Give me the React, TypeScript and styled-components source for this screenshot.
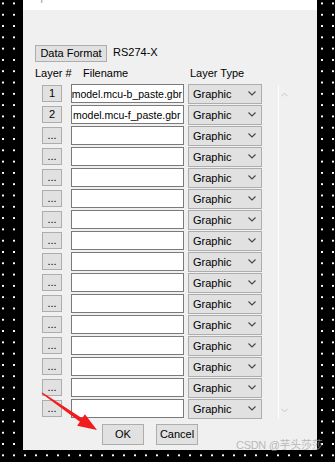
import React from 'react';
import styled, { createGlobalStyle } from 'styled-components';

const GlobalStyle = createGlobalStyle`
  html, body {
    margin: 0;
    padding: 0;
  }
  body {
    background-color: #000;
    background-image: radial-gradient(circle at 1px 1px, #fff 0.9px, transparent 1.3px);
    background-size: 11px 11.3px;
    background-position: 2px 2.5px;
    font-family: 'Liberation Sans', Arial, sans-serif;
  }
`;

const Screen = styled.div`
  position: relative;
  width: 335px;
  height: 462px;
  overflow: hidden;
  display: flex;
  padding-left: 23px;
  box-sizing: border-box;
`;

const Dialog = styled.div`
  width: 294px;
  height: 450px;
  display: flex;
  flex-direction: column;
`;

const TitleBar = styled.div`
  height: 10px;
  background: #fff;
  overflow: hidden;
  padding-left: 4px;
`;

const TitleText = styled.span`
  display: block;
  margin-top: -10px;
  font-size: 12px;
  line-height: 12px;
  color: #9aa3b5;
`;

const Body = styled.div`
  flex: 1;
  background: #f0f0f0;
  padding: 35px 0 0 12px;
  display: flex;
  flex-direction: column;
  font-size: 11px;
  color: #000;
`;

const TopRow = styled.div`
  display: flex;
  align-items: flex-start;
  gap: 6px;
  height: 17px;
`;

const WinButton = styled.button<{ $w: number; $h: number }>`
  box-sizing: border-box;
  width: ${p => p.$w}px;
  height: ${p => p.$h}px;
  padding: 0;
  background: #e1e1e1;
  border: 1px solid #adadad;
  border-radius: 0;
  font-family: 'Liberation Sans', Arial, sans-serif;
  font-size: 11px;
  line-height: ${p => p.$h - 2}px;
  color: #000;
`;

const FormatValue = styled.span`
  line-height: 14px;
`;

const HeaderRow = styled.div`
  display: grid;
  grid-template-columns: 48px 107px auto;
  margin-top: 5px;
  height: 13px;
  line-height: 13px;
`;

const TableArea = styled.div`
  display: flex;
  margin-top: 3px;
`;

const RowsGrid = styled.div`
  display: grid;
  grid-template-columns: 36px 117px 74px;
  grid-auto-rows: 21px;
  align-items: center;
`;

const NumButton = styled(WinButton)`
  margin-left: 7px;
`;

const FileField = styled.div<{ $scrolled?: boolean }>`
  box-sizing: border-box;
  width: 113px;
  height: 19px;
  background: #fff;
  border: 1px solid #7a7a7a;
  padding: 0 1px;
  display: flex;
  align-items: center;
  justify-content: ${p => (p.$scrolled ? 'flex-end' : 'flex-start')};
  overflow: hidden;
  white-space: nowrap;
  font-size: 10.5px;
`;

const Select = styled.div`
  box-sizing: border-box;
  width: 74px;
  height: 20px;
  background: #e1e1e1;
  border: 1px solid #adadad;
  padding: 0 5px 0 4px;
  display: flex;
  align-items: center;
  justify-content: space-between;
`;

const Scrollbar = styled.div`
  box-sizing: border-box;
  width: 12px;
  height: 334px;
  margin: 2px 0 0 16px;
  border-left: 1px solid #fff;
  padding: 7px 0 6px;
  display: flex;
  flex-direction: column;
  align-items: center;
  justify-content: space-between;
`;

const Footer = styled.div`
  display: flex;
  gap: 12px;
  margin-top: 5px;
  padding-left: 67px;
`;

const Overlay = styled.svg`
  position: absolute;
  left: 0;
  top: 0;
  pointer-events: none;
`;

const Watermark = styled.div`
  position: absolute;
  left: 236px;
  top: 439px;
  font-family: 'Liberation Sans', 'Noto Sans CJK SC', sans-serif;
  font-size: 11px;
  line-height: 13px;
  color: rgba(165, 165, 165, 0.75);
  white-space: nowrap;
  letter-spacing: -0.3px;
`;

const Chevron = ({ up, color, w = 8 }: { up?: boolean; color: string; w?: number }) => (
  <svg width={w} height={5} viewBox="0 0 8 5">
    <polyline
      points={up ? '0.5,4.5 4,1 7.5,4.5' : '0.5,0.5 4,4 7.5,0.5'}
      fill="none"
      stroke={color}
      strokeWidth={1.1}
    />
  </svg>
);

interface LayerRow {
  label: string;
  file: string;
  scrolled?: boolean;
}

const rows: LayerRow[] = [
  { label: '1', file: 'model.mcu-b_paste.gbr', scrolled: true },
  { label: '2', file: 'model.mcu-f_paste.gbr' },
  ...Array.from({ length: 14 }, () => ({ label: '...', file: '' })),
];

export default function App() {
  return (
    <>
      <GlobalStyle />
      <Screen>
        <Dialog>
          <TitleBar>
            <TitleText>Import Gerber</TitleText>
          </TitleBar>
          <Body>
            <TopRow>
              <WinButton $w={72} $h={17}>Data Format</WinButton>
              <FormatValue>RS274-X</FormatValue>
            </TopRow>

            <HeaderRow>
              <span>Layer #</span>
              <span>Filename</span>
              <span>Layer Type</span>
            </HeaderRow>

            <TableArea>
              <RowsGrid>
                {rows.map((r, i) => (
                  <React.Fragment key={i}>
                    <NumButton $w={20} $h={17}>{r.label}</NumButton>
                    <FileField $scrolled={r.scrolled}>
                      <span>{r.file}</span>
                    </FileField>
                    <Select>
                      <span>Graphic</span>
                      <Chevron color="#444" />
                    </Select>
                  </React.Fragment>
                ))}
              </RowsGrid>
              <Scrollbar>
                <Chevron up color="#c4c4c4" w={7} />
                <Chevron color="#c4c4c4" w={7} />
              </Scrollbar>
            </TableArea>

            <Footer>
              <WinButton $w={42} $h={21}>OK</WinButton>
              <WinButton $w={42} $h={21}>Cancel</WinButton>
            </Footer>
          </Body>
        </Dialog>

        <Overlay width={335} height={462} viewBox="0 0 335 462">
          <polygon
            points="42.4,392.4 82.1,418.3 84.9,414.2 97,430 77.1,425.8 79.9,421.7 41.6,393.6"
            fill="#f21c1c"
          />
        </Overlay>
        <Watermark>CSDN @芋头莎莎</Watermark>
      </Screen>
    </>
  );
}
